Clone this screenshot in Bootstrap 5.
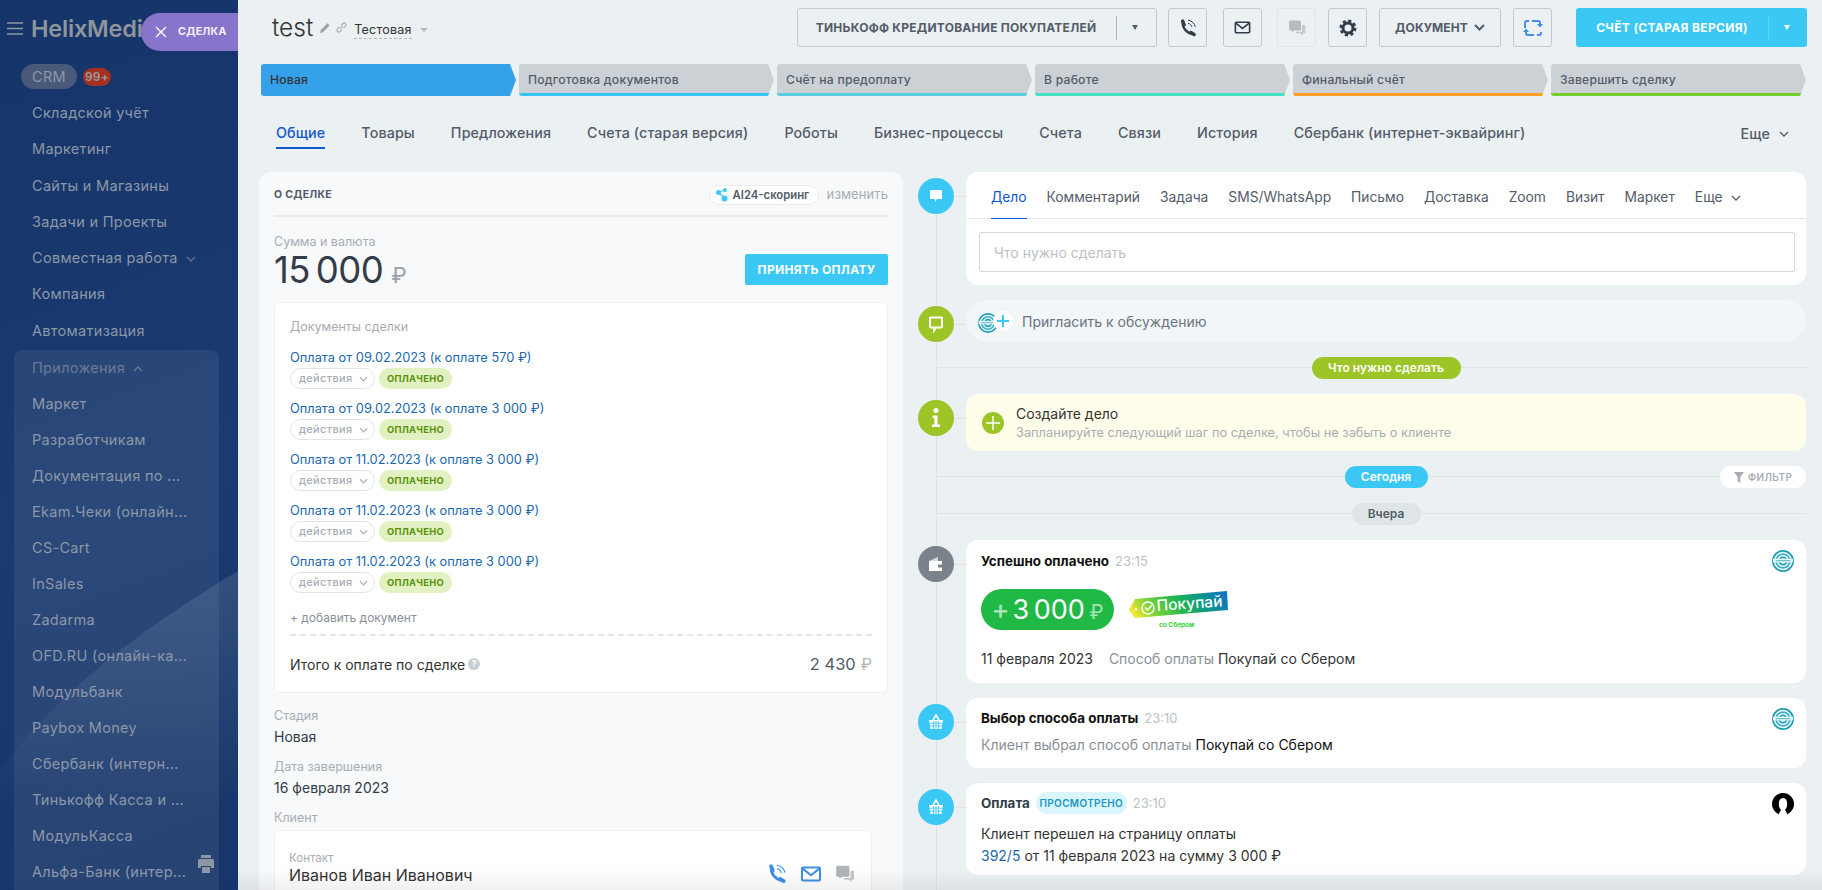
<!DOCTYPE html>
<html lang="ru">
  <head>
    <meta charset="UTF-8" />
    <meta name="viewport" content="width=device-width, initial-scale=1.0" />
    <title>test — сделка</title>
    <link
      rel="stylesheet"
      href="https://cdn.jsdelivr.net/npm/bootstrap@5.3.0/dist/css/bootstrap.min.css"
    />
    <style>
      body {
        font-family: Inter, "Liberation Sans", sans-serif;
        background-color: #ebf0f3;
        color: #333;
        height: 890px;
        overflow: hidden;
      }
      .app-wrap {
        height: 890px;
      }

      /* левое меню */
      .side-menu {
        width: 238px;
        flex-shrink: 0;
        height: 890px;
        overflow: hidden;
        position: relative;
        background: linear-gradient(160deg, #15346a 0%, #1a3b70 55%, #17356a 100%);
        color: #8d97a6;
        font-size: 14.5px;
        letter-spacing: 0.3px;
      }
      .side-swoosh {
        position: absolute;
        left: 0;
        top: 560px;
      }
      .side-inner {
        position: relative;
      }
      .side-logo {
        height: 57px;
        padding-left: 7px;
        gap: 8px;
      }
      .side-logo b {
        font-size: 23.5px;
        font-weight: 600;
        color: #90949b;
        letter-spacing: -0.2px;
        white-space: nowrap;
      }
      .side-crm {
        height: 25px;
        margin: 7px 0 6px 21px;
        gap: 6px;
      }
      .crm-pill {
        width: 56px;
        height: 25px;
        border-radius: 13px;
        background: #49597a;
        line-height: 25px;
        text-align: center;
      }
      .crm-count {
        font-size: 12px;
        font-weight: 600;
        letter-spacing: 0.2px;
        background: #a5301f;
        color: #9e9a9c;
        border-radius: 9px;
        width: 28px;
        height: 18px;
        line-height: 18px;
        text-align: center;
      }
      .side-row {
        height: 36.3px;
        line-height: 36.3px;
        padding-left: 32px;
        white-space: nowrap;
      }
      .side-apps {
        position: relative;
        margin: 1px 19px 0 14px;
        border-radius: 8px 8px 0 0;
        background: rgba(255, 255, 255, 0.07);
      }
      .side-apps .side-row {
        height: 36px;
        line-height: 36px;
        padding-left: 18px;
      }
      .side-apps .apps-title {
        color: #6d7a90;
      }
      .side-print {
        position: absolute;
        right: 5px;
        bottom: 16px;
      }
      .deal-slider {
        position: absolute;
        left: 141px;
        top: 13px;
        width: 97px;
        height: 38px;
        border-radius: 19px 0 0 19px;
        background: #8774cb;
        color: #f3f0fb;
        font-size: 10.6px;
        font-weight: 700;
        letter-spacing: 0.3px;
        padding-left: 14px;
        gap: 11px;
      }

      /* основная часть */
      .main-area {
        flex: 1 1 auto;
        min-width: 0;
        height: 890px;
        overflow: hidden;
        position: relative;
        padding: 8px 15px 0 21px;
      }
      .bottom-fade {
        position: absolute;
        left: 0;
        right: 0;
        bottom: 0;
        height: 22px;
        background: linear-gradient(rgba(0, 0, 0, 0), rgba(0, 0, 0, 0.06));
      }
      .head-row {
        height: 39px;
      }
      .deal-title {
        font-size: 24.5px;
        font-weight: 300;
        color: #333;
        margin-left: 13px;
        margin-right: 6px;
        line-height: 39px;
      }
      .deal-cat {
        font-size: 12.5px;
        color: #333;
        border-bottom: 1px dashed #b5babf;
        margin-left: 6px;
        line-height: 17px;
        margin-top: 5px;
        letter-spacing: 0.2px;
      }
      .tri-down {
        width: 0;
        height: 0;
        border-left: 4px solid transparent;
        border-right: 4px solid transparent;
        border-top: 4px solid #b8bdc2;
        margin-left: 8px;
        margin-top: 5px;
      }
      .tool-btn {
        height: 39px;
        padding: 0;
        border: 1px solid #c3c9ce;
        border-radius: 3px;
        background: transparent;
        color: #535c69;
        font-size: 12px;
        font-weight: 700;
        letter-spacing: 0.25px;
        display: flex;
        align-items: center;
        justify-content: center;
        white-space: nowrap;
      }
      .tool-square {
        width: 39px;
      }
      .tool-off {
        border-color: #d9dee2;
        opacity: 0.55;
      }
      .btn-credit {
        width: 360px;
      }
      .credit-sep {
        width: 1px;
        height: 24px;
        background: #aeb3b9;
        margin: 0 15px 0 20px;
      }
      .btn-doc {
        width: 122px;
        gap: 6px;
        letter-spacing: 0.1px;
      }
      .btn-invoice {
        width: 231px;
        height: 39px;
        border: 0;
        border-radius: 3px;
        background: #3bc8f5;
        color: #fff;
        font-size: 12px;
        font-weight: 700;
        letter-spacing: 0.35px;
        margin-left: 24px;
        padding: 0;
        display: flex;
        align-items: center;
      }
      .btn-invoice .inv-text {
        width: 192px;
        text-align: center;
      }
      .btn-invoice .inv-sep {
        width: 1px;
        height: 24px;
        background: #62d3f7;
      }
      .tri-white {
        width: 0;
        height: 0;
        border-left: 3.5px solid transparent;
        border-right: 3.5px solid transparent;
        border-top: 5px solid #fff;
        margin-left: 15px;
      }

      /* стадии */
      .stage-row {
        margin-top: 17px;
        margin-left: 2px;
        gap: 3px;
        height: 32px;
        width: 1545px;
      }
      .stage-step {
        flex: 1 1 0;
        height: 32px;
        line-height: 31px;
        padding-left: 9px;
        font-size: 12.2px;
        font-weight: 500;
        letter-spacing: 0.2px;
        color: #535c69;
        background: #ccd1d5;
        border-bottom: 3px solid transparent;
        border-radius: 3px 0 0 3px;
        clip-path: polygon(0 0, calc(100% - 6px) 0, 100% 50%, calc(100% - 6px) 100%, 0 100%);
      }
      .stage-first {
        background: #35a1ea;
        color: #333;
      }

      /* вкладки */
      .deal-tabs {
        margin-top: 20px;
        height: 33px;
        padding-left: 17px;
        padding-right: 18px;
        font-size: 14.3px;
        font-weight: 500;
        letter-spacing: 0.12px;
      }
      .deal-tabs .nav-link {
        color: #535c69;
        padding: 6px 0 0;
        margin-right: 36px;
        height: 33px;
        white-space: nowrap;
      }
      .deal-tabs .nav-link.active {
        color: #1058d0;
        border-bottom: 2px solid #1058d0;
      }
      .tabs-more {
        color: #535c69;
        gap: 9px;
        padding-top: 3px;
      }

      .columns-row {
        margin-top: 23px;
      }

      /* о сделке */
      .about-card {
        width: 644px;
        flex-shrink: 0;
        height: 760px;
        border: 0;
        border-radius: 12px;
        background: #f7f9fb;
        padding: 0 15px;
      }
      .about-head {
        height: 45px;
        padding-top: 3px;
        border-bottom: 2px solid #e9ecef;
      }
      .about-head b {
        font-size: 10.5px;
        font-weight: 700;
        color: #535c69;
        letter-spacing: 0.3px;
      }
      .ai-pill {
        height: 20px;
        width: 110px;
        border: 1px solid #e7ebee;
        border-radius: 10px;
        background: #fff;
        font-size: 11.3px;
        font-weight: 600;
        color: #535c69;
        gap: 5px;
        padding-left: 6px;
        margin-right: 8px;
      }
      .change-link {
        font-size: 13px;
        color: #a8adb4;
        letter-spacing: 0.1px;
      }
      .field-label {
        font-size: 12.5px;
        line-height: 16px;
        color: #a8adb4;
      }
      .sum-label {
        margin-top: 17px;
      }
      .sum-row {
        height: 36px;
      }
      .sum-value {
        font-size: 36.5px;
        font-weight: 400;
        color: #333c48;
        line-height: 36px;
        letter-spacing: -0.5px;
        word-spacing: -4px;
        margin-top: 2px;
      }
      .sum-value span {
        font-size: 22px;
        color: #9aa0a7;
        margin-left: 2px;
        font-weight: 400;
      }
      .btn-pay {
        width: 143px;
        height: 31px;
        padding: 0;
        border: 0;
        border-radius: 2px;
        background: #3bc8f5;
        color: #fff;
        font-size: 12px;
        font-weight: 700;
        letter-spacing: 0.35px;
        margin-top: 4px;
      }
      .docs-box {
        margin-top: 16px;
        height: 391px;
        border: 1px solid #edf0f2;
        border-radius: 6px;
        background: #fff;
        padding: 16px 15px 0;
      }
      .doc-item {
        height: 51px;
      }
      .docs-list {
        margin-top: 13px;
      }
      .doc-link {
        display: block;
        height: 20px;
        line-height: 20px;
        font-size: 12.8px;
        color: #2067b0;
        text-decoration: none;
      }
      .doc-actions {
        height: 21px;
        gap: 4px;
      }
      .act-pill {
        width: 85px;
        height: 21px;
        border: 1px solid #dfe3e6;
        border-radius: 11px;
        font-size: 11px;
        font-weight: 500;
        letter-spacing: 0.3px;
        color: #a8adb4;
        padding-left: 8px;
        gap: 7px;
        white-space: nowrap;
      }
      .paid-pill {
        width: 73px;
        height: 21px;
        border-radius: 11px;
        background: #e1f1c2;
        color: #589309;
        font-size: 9.4px;
        font-weight: 700;
        letter-spacing: 0.3px;
        line-height: 21px;
        text-align: center;
        padding: 0;
      }
      .doc-add {
        display: block;
        font-size: 12px;
        line-height: 16px;
        color: #8a9099;
        margin-top: 7px;
        text-decoration: none;
      }
      .doc-total {
        margin-top: 8px;
        border-top: 2px dashed #e4e7ea;
        height: 58px;
      }
      .total-name {
        font-size: 14px;
        color: #333;
        gap: 3px;
      }
      .help-dot {
        width: 12px;
        height: 12px;
        border-radius: 50%;
        background: #c9ced3;
        color: #fff;
        font-size: 9px;
        font-weight: 700;
        line-height: 12px;
        text-align: center;
      }
      .total-sum {
        font-size: 16.5px;
        color: #535c69;
      }
      .total-sum span {
        color: #b0b5ba;
      }
      .field-value {
        font-size: 14px;
        line-height: 20px;
        color: #333c48;
        margin-top: 3px;
      }
      .field-block {
        margin-top: 12px;
      }
      .field-first {
        margin-top: 15px;
      }
      .client-box {
        margin-top: 4px;
        width: 598px;
        height: 80px;
        border: 1px solid #edf0f2;
        border-radius: 6px;
        background: #fff;
        padding: 19px 14px 0;
      }
      .client-box small {
        display: block;
        font-size: 11.5px;
        line-height: 16px;
        color: #a8adb4;
      }
      .client-name {
        font-size: 16px;
        line-height: 20px;
        color: #333;
        margin-top: -3px;
      }
      .client-icons {
        margin-top: -4px;
        gap: 11px;
        margin-right: 1px;
      }

      /* лента */
      .feed-col {
        position: relative;
        margin-left: 15px;
        width: 888px;
      }
      .feed-col::before {
        content: "";
        position: absolute;
        left: 18px;
        top: 20px;
        bottom: -200px;
        width: 1px;
        background: #dfe3e6;
      }
      .feed-item {
        position: relative;
        display: flex;
        align-items: flex-start;
        margin-bottom: 15px;
      }
      .feed-dot {
        position: relative;
        width: 36px;
        height: 36px;
        border-radius: 50%;
        margin-top: 6px;
        flex-shrink: 0;
        margin-right: 12px;
        display: flex;
        align-items: center;
        justify-content: center;
      }
      .feed-dot::after {
        content: "";
        position: absolute;
        left: 36px;
        top: 18px;
        width: 12px;
        height: 1px;
        background: #dfe3e6;
      }
      .dot-blue {
        background: #3bc8f5;
      }
      .dot-green {
        background: #9dc527;
      }
      .dot-grey {
        background: #7c8289;
      }
      .feed-card {
        flex: 1 1 auto;
        border: 0;
        border-radius: 12px;
        background: #fff;
        min-width: 0;
      }
      .composer-tabs {
        height: 47px;
        border-bottom: 1px solid #e3e6e9;
        padding-left: 25px;
        font-size: 13.8px;
        color: #535c69;
        gap: 20px;
      }
      .composer-tabs .nav-link {
        color: #535c69;
        padding: 0;
        height: 47px;
        line-height: 50px;
      }
      .composer-tabs .nav-link.active {
        color: #1058d0;
        border-bottom: 1px solid #1058d0;
      }
      .composer-input {
        display: block;
        width: 816px;
        height: 40px;
        margin: 13px 0 13px 13px;
        border: 1px solid #d5d9dd;
        border-radius: 2px;
        font-size: 14px;
        padding: 0 14px;
        box-shadow: none;
      }
      .composer-input::placeholder {
        color: #bcc1c6;
      }
      .invite-card {
        background: #f2f6f8;
        height: 42px;
        border-radius: 21px;
        padding-left: 12px;
        color: #6a737f;
        font-size: 14px;
        gap: 8px;
      }
      .invite-icons {
        position: relative;
        width: 36px;
        height: 20px;
      }
      .invite-plus {
        position: absolute;
        left: 15px;
        top: 0;
        width: 20px;
        height: 20px;
        border-radius: 50%;
        background: #fff;
      }
      .feed-sep {
        position: relative;
        height: 22px;
        margin-bottom: 15px;
        margin-left: 18px;
      }
      .feed-sep::before {
        content: "";
        position: absolute;
        left: 0;
        right: 0;
        top: 10px;
        height: 1px;
        background: #dfe3e6;
      }
      .sep-pill {
        position: relative;
        height: 22px;
        line-height: 22px;
        border-radius: 11px;
        font-size: 12px;
        font-weight: 600;
        text-align: center;
        padding: 0;
        margin-left: 30px;
      }
      .sep-todo {
        width: 149px;
        background: #9dc527;
        color: #fff;
      }
      .sep-today {
        width: 83px;
        background: #3bc8f5;
        color: #fff;
      }
      .sep-yesterday {
        width: 69px;
        background: #dfe5e7;
        color: #535c69;
      }
      .filter-pill {
        position: absolute;
        right: 0;
        top: 0;
        width: 86px;
        height: 22px;
        border-radius: 11px;
        background: #fff;
        color: #a8adb4;
        font-size: 10px;
        font-weight: 600;
        letter-spacing: 0.4px;
        gap: 4px;
      }
      .todo-card {
        background: #fefeea;
        height: 57px;
        padding-left: 16px;
        gap: 12px;
      }
      .todo-plus {
        width: 22px;
        height: 22px;
        border-radius: 50%;
        background: #9dc527;
        flex-shrink: 0;
      }
      .todo-title {
        font-size: 14px;
        line-height: 19px;
        color: #333;
      }
      .todo-sub {
        font-size: 12.8px;
        line-height: 19px;
        color: #a8adb4;
      }
      .event-card {
        position: relative;
        padding: 11px 15px 0;
      }
      .event-head {
        height: 20px;
        gap: 6px;
        font-size: 13px;
        line-height: 20px;
      }
      .event-head b {
        font-weight: 700;
        color: #111;
        font-size: 13.4px;
      }
      .event-time {
        color: #bcc1c6;
      }
      .event-logo {
        position: absolute;
        right: 12px;
        top: 10px;
      }
      .sum-line {
        margin-top: 18px;
        height: 41px;
        gap: 15px;
      }
      .sum-pill {
        width: 133px;
        height: 41px;
        border-radius: 21px;
        background: #21b946;
        color: #fff;
        font-size: 27px;
        font-weight: 400;
        line-height: 41px;
        text-align: center;
        word-spacing: -3px;
        white-space: nowrap;
      }
      .sum-pill span {
        color: #a6e3b5;
        font-weight: 500;
        margin-right: 3px;
      }
      .sum-pill i {
        color: #a6e3b5;
        font-style: normal;
        font-size: 20px;
      }
      .event-text {
        font-size: 14px;
        line-height: 22px;
        color: #333;
      }
      .muted-text {
        color: #8a9099;
      }
      .muted-gap {
        margin-left: 12px;
      }
      .seen-pill {
        width: 91px;
        height: 22px;
        line-height: 22px;
        border-radius: 11px;
        background: #daf5fd;
        color: #1897c4;
        font-size: 10px;
        font-weight: 600;
        letter-spacing: 0.35px;
        padding: 0;
        text-align: center;
      }
      .event-link {
        color: #2067b0;
        text-decoration: none;
      }
    </style>
  </head>
  <body>
    <svg width="0" height="0" class="d-block">
      <defs>
        <symbol id="helix-logo" viewBox="0 0 24 24">
          <circle cx="12" cy="12" r="11" fill="none" stroke="#1b9db5" stroke-width="2" />
          <circle cx="12" cy="12" r="7.5" fill="none" stroke="#38b3c9" stroke-width="2" />
          <circle cx="12" cy="12" r="4" fill="none" stroke="#1b9db5" stroke-width="2" />
          <rect x="1" y="9.5" width="22" height="4" fill="#e6f5f8" />
          <rect x="4" y="11" width="16" height="1.2" fill="#5fbccd" />
        </symbol>
        <symbol id="basket-icon" viewBox="0 0 20 20">
          <path d="M7 8l3-5 3 5" fill="none" stroke="#fff" stroke-width="1.5" />
          <path d="M3 8h14l-1.6 9H4.6z" fill="#fff" />
          <path d="M3 11.2h14M3 14h14M7.5 9v8M10 9v8M12.5 9v8" stroke="#3bc8f5" stroke-width="0.9" />
        </symbol>
        <symbol id="phone-icon" viewBox="0 0 20 20">
          <path d="M4.800 4C4 9.500 8.500 15 14.800 16" fill="none" stroke="currentColor" stroke-width="2.400" />
          <path d="M4.600 3l1.600 3.800M12.800 14.500l3.300 2" fill="none" stroke="currentColor" stroke-width="3.400" stroke-linecap="round" />
          <path d="M10 2c3.600.6 6.400 3.300 7.300 6.800M10 5.300c1.900.4 3.400 1.800 4 3.700" fill="none" stroke="currentColor" stroke-width="1" />
        </symbol>
        <symbol id="mail-icon" viewBox="0 0 20 20">
          <rect x="2.500" y="4.500" width="15" height="11" rx="1" fill="none" stroke="currentColor" stroke-width="1.700" />
          <path d="M3 5.500 10 11l7-5.500" fill="none" stroke="currentColor" stroke-width="1.700" />
        </symbol>
        <symbol id="chat-icon" viewBox="0 0 20 20">
          <path d="M2 3.500a1 1 0 0 1 1-1h10a1 1 0 0 1 1 1v8a1 1 0 0 1-1 1H7l-2 2v-2H3a1 1 0 0 1-1-1z" fill="currentColor" />
          <path d="M15 7h2.500a.7.7 0 0 1 .7.7v6.800a.7.7 0 0 1-.7.7H16v2.500l-2.500-2.500H9v-1.500h6z" fill="currentColor" opacity="0.75" />
        </symbol>
        <symbol id="chev-icon" viewBox="0 0 10 6">
          <path d="M1 1l4 4 4-4" fill="none" stroke="currentColor" stroke-width="1.300" />
        </symbol>
      </defs>
    </svg>

    <div class="app-wrap d-flex">
      <!-- левое меню -->
      <aside class="side-menu">
        <svg class="side-swoosh" width="238" height="330" viewBox="0 0 238 330">
          <defs>
            <linearGradient id="swoosh-fill" x1="0" y1="0" x2="0" y2="1">
              <stop offset="0" stop-color="#fff" stop-opacity="0.11" />
              <stop offset="0.75" stop-color="#fff" stop-opacity="0" />
            </linearGradient>
          </defs>
          <path d="M0 210C60 130 140 70 238 11V330H0z" fill="url(#swoosh-fill)" />
        </svg>
        <div class="side-inner">
          <div class="side-logo d-flex align-items-center">
            <svg width="16" height="13" viewBox="0 0 16 13">
              <path d="M0 1h16M0 6.500h16M0 12h16" stroke="#8d97a6" stroke-width="1.600" />
            </svg>
            <b>HelixMedia</b>
          </div>
          <div class="side-crm d-flex align-items-center">
            <span class="crm-pill">CRM</span>
            <span class="crm-count">99+</span>
          </div>
          <div class="side-row">Складской учёт</div>
          <div class="side-row">Маркетинг</div>
          <div class="side-row">Сайты и Магазины</div>
          <div class="side-row">Задачи и Проекты</div>
          <div class="side-row">
            Совместная работа
            <svg class="ms-1" width="10" height="6" color="#5f6e88"><use href="#chev-icon" /></svg>
          </div>
          <div class="side-row">Компания</div>
          <div class="side-row">Автоматизация</div>
          <div class="side-apps">
            <div class="side-row apps-title">
              Приложения
              <svg class="ms-1" width="10" height="6" color="#6d7a90" style="transform: scaleY(-1)"><use href="#chev-icon" /></svg>
            </div>
            <div class="side-row">Маркет</div>
            <div class="side-row">Разработчикам</div>
            <div class="side-row">Документация по ...</div>
            <div class="side-row">Ekam.Чеки (онлайн...</div>
            <div class="side-row">CS-Cart</div>
            <div class="side-row">InSales</div>
            <div class="side-row">Zadarma</div>
            <div class="side-row">OFD.RU (онлайн-ка...</div>
            <div class="side-row">Модульбанк</div>
            <div class="side-row">Paybox Money</div>
            <div class="side-row">Сбербанк (интерн...</div>
            <div class="side-row">Тинькофф Касса и ...</div>
            <div class="side-row">МодульКасса</div>
            <div class="side-row">Альфа-Банк (интер...</div>
            <svg class="side-print" width="16" height="19" viewBox="0 0 16 19">
              <path d="M3 0h10v3H3zM1.500 4h13A1.500 1.500 0 0 1 16 5.500V13h-3v-2H3v2H0V5.500A1.500 1.500 0 0 1 1.500 4zM4 12h8v6H4z" fill="#8d97a6" />
            </svg>
          </div>
        </div>
        <div class="deal-slider d-flex align-items-center">
          <svg width="12" height="12" viewBox="0 0 12 12">
            <path d="M1 1l10 10M11 1L1 11" stroke="#fff" stroke-width="1.400" />
          </svg>
          <span>СДЕЛКА</span>
        </div>
      </aside>

      <main class="main-area">
        <!-- заголовок и кнопки -->
        <div class="head-row d-flex align-items-center">
          <span class="deal-title">test</span>
          <svg width="12" height="12" viewBox="0 0 12 12">
            <path d="M1 11l.8-3L8.500 1.300l2.200 2.200L4 10.200z" fill="#9da2a8" />
          </svg>
          <svg class="ms-1" width="13" height="13" viewBox="0 0 13 13">
            <path d="M5.500 7.500 7.500 5.500M4.500 6 2.300 8.200a1.800 1.800 0 0 0 2.500 2.500L7 8.500M6 4.500l2.200-2.200a1.800 1.800 0 0 1 2.500 2.500L8.500 7" fill="none" stroke="#a8adb4" stroke-width="1.200" />
          </svg>
          <span class="deal-cat">Тестовая</span>
          <span class="tri-down"></span>
          <div class="ms-auto d-flex align-items-center">
            <button class="btn tool-btn btn-credit">
              ТИНЬКОФФ КРЕДИТОВАНИЕ ПОКУПАТЕЛЕЙ
              <span class="credit-sep"></span>
              <span class="tri-white" style="margin: 0; border-top-color: #535c69"></span>
            </button>
            <button class="btn tool-btn tool-square" style="margin-left: 11px">
              <svg width="20" height="20" color="#333c48"><use href="#phone-icon" /></svg>
            </button>
            <button class="btn tool-btn tool-square" style="margin-left: 16px">
              <svg width="19" height="19" color="#333c48"><use href="#mail-icon" /></svg>
            </button>
            <button class="btn tool-btn tool-square tool-off" style="margin-left: 15px">
              <svg width="20" height="20" color="#8a9099"><use href="#chat-icon" /></svg>
            </button>
            <button class="btn tool-btn tool-square" style="margin-left: 12px">
              <svg width="18" height="18" viewBox="0 0 18 18">
                <circle cx="9" cy="9" r="5" fill="none" stroke="#333c48" stroke-width="3" />
                <circle cx="9" cy="9" r="7.200" fill="none" stroke="#333c48" stroke-width="2.600" stroke-dasharray="3.100 2.550" />
              </svg>
            </button>
            <button class="btn tool-btn btn-doc" style="margin-left: 12px">
              ДОКУМЕНТ
              <svg width="11" height="7" viewBox="0 0 11 7"><path d="M1 1l4.500 4.500L10 1" fill="none" stroke="#535c69" stroke-width="2" /></svg>
            </button>
            <button class="btn tool-btn tool-square" style="margin-left: 12px">
              <svg width="20" height="20" viewBox="0 0 20 20">
                <path d="M2 10V5a2 2 0 0 1 2-2h2M9 3h6a2 2 0 0 1 2 2v1M18 14v1a2 2 0 0 1-2 2h-2M11 17H5a2 2 0 0 1-2-2v-1" fill="none" stroke="#3f8fe8" stroke-width="2" />
                <path d="M14 6h6l-3 3.500zM0 14h6l-3-3.500z" fill="#3f8fe8" />
              </svg>
            </button>
            <button class="btn btn-invoice">
              <span class="inv-text">СЧЁТ (СТАРАЯ ВЕРСИЯ)</span>
              <span class="inv-sep"></span>
              <span class="tri-white"></span>
            </button>
          </div>
        </div>

        <!-- стадии сделки -->
        <div class="stage-row d-flex">
          <div class="stage-step stage-first">Новая</div>
          <div class="stage-step" style="border-bottom-color: #39c5f2">Подготовка документов</div>
          <div class="stage-step" style="border-bottom-color: #55cfe0">Счёт на предоплату</div>
          <div class="stage-step" style="border-bottom-color: #47e0c2">В работе</div>
          <div class="stage-step" style="border-bottom-color: #ff9f25">Финальный счёт</div>
          <div class="stage-step" style="border-bottom-color: #72cf2d">Завершить сделку</div>
        </div>

        <!-- вкладки -->
        <nav class="nav deal-tabs flex-nowrap">
          <a class="nav-link active" href="#">Общие</a>
          <a class="nav-link" href="#">Товары</a>
          <a class="nav-link" href="#">Предложения</a>
          <a class="nav-link" href="#">Счета (старая версия)</a>
          <a class="nav-link" href="#">Роботы</a>
          <a class="nav-link" href="#">Бизнес-процессы</a>
          <a class="nav-link" href="#">Счета</a>
          <a class="nav-link" href="#">Связи</a>
          <a class="nav-link" href="#">История</a>
          <a class="nav-link" href="#">Сбербанк (интернет-эквайринг)</a>
          <span class="tabs-more ms-auto d-flex align-items-center">
            Еще
            <svg width="10" height="6" color="#535c69"><use href="#chev-icon" /></svg>
          </span>
        </nav>

        <div class="columns-row d-flex align-items-start">
          <!-- о сделке -->
          <section class="card about-card">
            <div class="about-head d-flex align-items-center">
              <b>О СДЕЛКЕ</b>
              <span class="ai-pill ms-auto d-flex align-items-center">
                <svg width="12" height="14" viewBox="0 0 12 14">
                  <path d="M3 4l6-2M3 5l6 5" stroke="#3bc8f5" stroke-width="1.200" />
                  <circle cx="2.500" cy="4.500" r="2.500" fill="#3bc8f5" />
                  <circle cx="9" cy="2" r="2" fill="#3bc8f5" />
                  <circle cx="8.500" cy="10.500" r="3" fill="#3bc8f5" />
                </svg>
                AI24-скоринг
              </span>
              <span class="change-link">изменить</span>
            </div>
            <div class="field-label sum-label">Сумма и валюта</div>
            <div class="sum-row d-flex justify-content-between align-items-start">
              <div class="sum-value">15 000 <span>₽</span></div>
              <button class="btn btn-pay">ПРИНЯТЬ ОПЛАТУ</button>
            </div>
            <div class="docs-box">
              <div class="field-label">Документы сделки</div>
              <div class="docs-list">
                <div class="doc-item">
                  <a class="doc-link" href="#">Оплата от 09.02.2023 (к оплате 570 ₽)</a>
                  <div class="doc-actions d-flex">
                    <span class="act-pill d-flex align-items-center">действия <svg width="9" height="6" color="#a8adb4"><use href="#chev-icon" /></svg></span>
                    <span class="badge paid-pill">ОПЛАЧЕНО</span>
                  </div>
                </div>
                <div class="doc-item">
                  <a class="doc-link" href="#">Оплата от 09.02.2023 (к оплате 3 000 ₽)</a>
                  <div class="doc-actions d-flex">
                    <span class="act-pill d-flex align-items-center">действия <svg width="9" height="6" color="#a8adb4"><use href="#chev-icon" /></svg></span>
                    <span class="badge paid-pill">ОПЛАЧЕНО</span>
                  </div>
                </div>
                <div class="doc-item">
                  <a class="doc-link" href="#">Оплата от 11.02.2023 (к оплате 3 000 ₽)</a>
                  <div class="doc-actions d-flex">
                    <span class="act-pill d-flex align-items-center">действия <svg width="9" height="6" color="#a8adb4"><use href="#chev-icon" /></svg></span>
                    <span class="badge paid-pill">ОПЛАЧЕНО</span>
                  </div>
                </div>
                <div class="doc-item">
                  <a class="doc-link" href="#">Оплата от 11.02.2023 (к оплате 3 000 ₽)</a>
                  <div class="doc-actions d-flex">
                    <span class="act-pill d-flex align-items-center">действия <svg width="9" height="6" color="#a8adb4"><use href="#chev-icon" /></svg></span>
                    <span class="badge paid-pill">ОПЛАЧЕНО</span>
                  </div>
                </div>
                <div class="doc-item">
                  <a class="doc-link" href="#">Оплата от 11.02.2023 (к оплате 3 000 ₽)</a>
                  <div class="doc-actions d-flex">
                    <span class="act-pill d-flex align-items-center">действия <svg width="9" height="6" color="#a8adb4"><use href="#chev-icon" /></svg></span>
                    <span class="badge paid-pill">ОПЛАЧЕНО</span>
                  </div>
                </div>
              </div>
              <a class="doc-add" href="#">+ добавить документ</a>
              <div class="doc-total d-flex align-items-center justify-content-between">
                <span class="total-name d-flex align-items-center">Итого к оплате по сделке <span class="help-dot">?</span></span>
                <span class="total-sum">2 430 <span>₽</span></span>
              </div>
            </div>
            <div class="field-first field-label">Стадия</div>
            <div class="field-value">Новая</div>
            <div class="field-block field-label">Дата завершения</div>
            <div class="field-value">16 февраля 2023</div>
            <div class="field-block field-label">Клиент</div>
            <div class="client-box">
              <small>Контакт</small>
              <div class="d-flex align-items-center">
                <div class="client-name me-auto">Иванов Иван Иванович</div>
                <div class="client-icons d-flex align-items-center">
                  <svg width="22" height="22" color="#3f8fe8"><use href="#phone-icon" /></svg>
                  <svg width="24" height="24" color="#3f8fe8"><use href="#mail-icon" /></svg>
                  <svg width="22" height="22" color="#b0b5ba"><use href="#chat-icon" /></svg>
                </div>
              </div>
            </div>
          </section>

          <!-- лента -->
          <section class="feed-col">
            <div class="feed-item">
              <span class="feed-dot dot-blue">
                <svg width="16" height="16" viewBox="0 0 16 16"><path d="M2 2h12v9H9l-2 3v-3H2z" fill="#fff" /></svg>
              </span>
              <div class="card feed-card">
                <nav class="nav composer-tabs flex-nowrap">
                  <a class="nav-link active" href="#">Дело</a>
                  <a class="nav-link" href="#">Комментарий</a>
                  <a class="nav-link" href="#">Задача</a>
                  <a class="nav-link" href="#">SMS/WhatsApp</a>
                  <a class="nav-link" href="#">Письмо</a>
                  <a class="nav-link" href="#">Доставка</a>
                  <a class="nav-link" href="#">Zoom</a>
                  <a class="nav-link" href="#">Визит</a>
                  <a class="nav-link" href="#">Маркет</a>
                  <a class="nav-link d-flex align-items-center gap-2" href="#" style="line-height: 1; padding-top: 4px">Еще <svg width="10" height="6" color="#535c69"><use href="#chev-icon" /></svg></a>
                </nav>
                <input class="form-control composer-input" type="text" placeholder="Что нужно сделать" />
              </div>
            </div>

            <div class="feed-item">
              <span class="feed-dot dot-green">
                <svg width="16" height="18" viewBox="0 0 16 18"><path d="M3 2.500h10a1 1 0 0 1 1 1v8a1 1 0 0 1-1 1H8l-2 3v-3H3a1 1 0 0 1-1-1v-8a1 1 0 0 1 1-1z" fill="none" stroke="#fff" stroke-width="2" /></svg>
              </span>
              <div class="card feed-card invite-card flex-row align-items-center">
                <span class="invite-icons">
                  <svg width="20" height="20"><use href="#helix-logo" /></svg>
                  <span class="invite-plus d-flex align-items-center justify-content-center">
                    <svg width="12" height="12" viewBox="0 0 12 12"><path d="M6 0v12M0 6h12" stroke="#3bc8f5" stroke-width="2" /></svg>
                  </span>
                </span>
                Пригласить к обсуждению
              </div>
            </div>

            <div class="feed-sep d-flex justify-content-center">
              <span class="sep-pill sep-todo">Что нужно сделать</span>
            </div>

            <div class="feed-item">
              <span class="feed-dot dot-green">
                <svg width="10" height="20" viewBox="0 0 10 20">
                  <circle cx="5" cy="2.500" r="2.500" fill="#fff" />
                  <path d="M1.500 7.500h5v9H9V19H1v-2.500h2.300V10H1.500z" fill="#fff" />
                </svg>
              </span>
              <div class="card feed-card todo-card flex-row align-items-center">
                <span class="todo-plus d-flex align-items-center justify-content-center">
                  <svg width="14" height="14" viewBox="0 0 14 14"><path d="M7 0v14M0 7h14" stroke="#fff" stroke-width="1.500" /></svg>
                </span>
                <div>
                  <div class="todo-title">Создайте дело</div>
                  <div class="todo-sub">Запланируйте следующий шаг по сделке, чтобы не забыть о клиенте</div>
                </div>
              </div>
            </div>

            <div class="feed-sep d-flex justify-content-center">
              <span class="sep-pill sep-today">Сегодня</span>
              <span class="filter-pill d-flex align-items-center justify-content-center">
                <svg width="10" height="11" viewBox="0 0 10 11"><path d="M0 0h10L6.300 5v6L3.700 9.500V5z" fill="#a8adb4" /></svg>
                ФИЛЬТР
              </span>
            </div>
            <div class="feed-sep d-flex justify-content-center">
              <span class="sep-pill sep-yesterday">Вчера</span>
            </div>

            <div class="feed-item">
              <span class="feed-dot dot-grey">
                <svg width="16" height="16" viewBox="0 0 16 16">
                  <path d="M1 5l9-4v4z" fill="#d9dbdd" />
                  <path d="M1 5h13v10H1z" fill="#fff" />
                  <path d="M10 8.500h4v3h-4z" fill="#7c8289" />
                </svg>
              </span>
              <div class="card feed-card event-card" style="height: 143px">
                <div class="event-head d-flex">
                  <b>Успешно оплачено</b>
                  <span class="event-time">23:15</span>
                </div>
                <svg class="event-logo" width="22" height="22"><use href="#helix-logo" /></svg>
                <div class="sum-line d-flex align-items-center">
                  <div class="sum-pill"><span>+</span>3 000 <i>₽</i></div>
                  <svg width="99" height="38" viewBox="0 0 99 38">
                    <defs>
                      <linearGradient id="sber-fill" x1="0" y1="0.6" x2="1" y2="0.4">
                        <stop offset="0" stop-color="#f4e72e" />
                        <stop offset="0.2" stop-color="#7fd43a" />
                        <stop offset="0.5" stop-color="#21b84e" />
                        <stop offset="0.72" stop-color="#0f9c7d" />
                        <stop offset="1" stop-color="#0e76c4" />
                      </linearGradient>
                    </defs>
                    <path d="M6 8 98 0 99 19 6 27 0 19z" fill="url(#sber-fill)" />
                    <circle cx="7" cy="18" r="1.300" fill="#fff" />
                    <circle cx="19" cy="17" r="6" fill="none" stroke="#fff" stroke-width="1.400" />
                    <path d="M16 16.500l2.500 2.500 4.500-5" fill="none" stroke="#fff" stroke-width="1.400" />
                    <text x="28" y="20" font-size="15.500" font-weight="500" fill="#fff" transform="rotate(-4 28 20)">Покупай</text>
                    <text x="30" y="36" font-size="6.500" font-weight="700" fill="#38d23b">со Сбером</text>
                  </svg>
                </div>
                <div class="event-text" style="margin-top: 18px">
                  11 февраля 2023 <span class="muted-text muted-gap">Способ оплаты</span> Покупай со Сбером
                </div>
              </div>
            </div>

            <div class="feed-item">
              <span class="feed-dot dot-blue">
                <svg width="20" height="20"><use href="#basket-icon" /></svg>
              </span>
              <div class="card feed-card event-card" style="height: 70px; padding-top: 10px">
                <div class="event-head d-flex">
                  <b>Выбор способа оплаты</b>
                  <span class="event-time">23:10</span>
                </div>
                <svg class="event-logo" width="22" height="22"><use href="#helix-logo" /></svg>
                <div class="event-text" style="margin-top: 6px">
                  <span class="muted-text">Клиент выбрал способ оплаты</span> <span style="color: #111">Покупай со Сбером</span>
                </div>
              </div>
            </div>

            <div class="feed-item">
              <span class="feed-dot dot-blue">
                <svg width="20" height="20"><use href="#basket-icon" /></svg>
              </span>
              <div class="card feed-card event-card" style="height: 92px; padding-top: 9px">
                <div class="event-head d-flex align-items-center" style="height: 22px">
                  <b style="color: #333c48">Оплата</b>
                  <span class="badge seen-pill">ПРОСМОТРЕНО</span>
                  <span class="event-time">23:10</span>
                </div>
                <svg class="event-logo" width="22" height="22" viewBox="0 0 22 22">
                  <circle cx="11" cy="11" r="11" fill="#000" />
                  <path d="M7 22c0-3 1.500-4 2-5-2-2-2.500-5-2-8 .5-3 2-4 4-4s3.500 1 4 4c.5 3 0 6-2 8 .5 1 2 2 2 5z" fill="#fff" />
                </svg>
                <div class="event-text" style="margin-top: 9px">Клиент перешел на страницу оплаты</div>
                <div class="event-text"><a class="event-link" href="#">392/5</a> от 11 февраля 2023 на сумму 3 000 ₽</div>
              </div>
            </div>
          </section>
        </div>
        <div class="bottom-fade"></div>
      </main>
    </div>

    <script src="https://cdn.jsdelivr.net/npm/bootstrap@5.3.0/dist/js/bootstrap.bundle.min.js"></script>
  </body>
</html>
